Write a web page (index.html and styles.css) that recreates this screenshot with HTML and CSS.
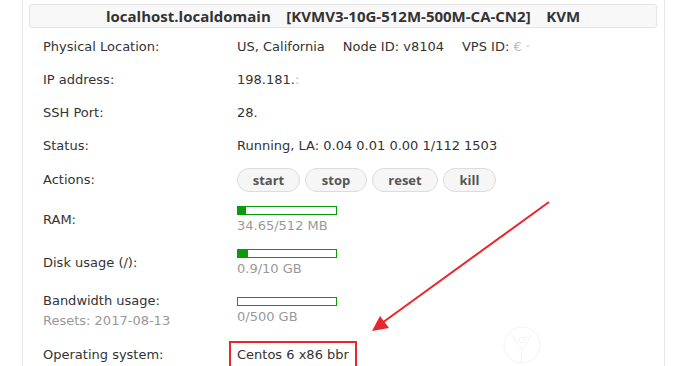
FILE: index.html
```html
<!DOCTYPE html>
<html>
<head>
<meta charset="utf-8">
<link rel="stylesheet" href="styles.css">
</head>
<body>
<div class="panel">
  <div class="title">localhost.localdomain&nbsp;&nbsp;&nbsp;&nbsp;[KVMV3-10G-512M-500M-CA-CN2]&nbsp;&nbsp;&nbsp;&nbsp;KVM</div>
  <div class="rows">
    <div class="row"><div class="label">Physical Location:</div><div class="value">US, California<span class="gap"></span>Node ID: v8104<span class="gap"></span>VPS ID: <span class="blur">€ ·</span></div></div>
    <div class="row"><div class="label">IP address:</div><div class="value">198.181.<span class="blur">:</span></div></div>
    <div class="row"><div class="label">SSH Port:</div><div class="value">28.</div></div>
    <div class="row"><div class="label">Status:</div><div class="value">Running, LA: 0.04 0.01 0.00 1/112 1503</div></div>
    <div class="row actions"><div class="label">Actions:</div><div class="value buttons"><button class="btn">start</button><button class="btn">stop</button><button class="btn">reset</button><button class="btn">kill</button></div></div>
    <div class="row meter ram"><div class="label">RAM:</div><div class="value"><div class="bar"><div class="fill" style="width:8px"></div></div><div class="muted">34.65/512 MB</div></div></div>
    <div class="row meter disk"><div class="label">Disk usage (/):</div><div class="value"><div class="bar"><div class="fill" style="width:10px"></div></div><div class="muted">0.9/10 GB</div></div></div>
    <div class="row meter bw"><div class="label">Bandwidth usage:<div class="muted reset">Resets: 2017-08-13</div></div><div class="value"><div class="bar"></div><div class="muted">0/500 GB</div></div></div>
    <div class="row os-row"><div class="label">Operating system:</div><div class="value"><span class="os">Centos 6 x86 bbr</span></div></div>
  </div>
</div>
<svg class="arrow" width="680" height="366" viewBox="0 0 680 366">
  <line x1="549" y1="202" x2="382" y2="323" stroke="#e8262b" stroke-width="2"/>
  <polygon points="372,331 380,316 389,328" fill="#e8262b"/>
</svg>
<svg class="mark" width="40" height="40" viewBox="0 0 40 40">
  <circle cx="20" cy="20" r="18" fill="none" stroke="#f4f4f4" stroke-width="1"/>
  <circle cx="20" cy="15" r="3" fill="none" stroke="#f4f4f4" stroke-width="1"/>
  <path d="M11 10 Q16 22 20 24 Q24 22 29 10 M20 24 L19 38" fill="none" stroke="#f4f4f4" stroke-width="1"/>
</svg>
</body>
</html>
```
FILE: styles.css
```css
html, body { margin: 0; padding: 0; background: #fff; }
body {
  width: 680px; height: 366px; overflow: hidden; position: relative;
  font-family: "DejaVu Sans", Verdana, sans-serif; font-size: 13px; color: #333;
}
.panel {
  margin-left: 22px; width: 643px; height: 366px;
  border-left: 1px solid #e6e6e6; border-right: 1px solid #e6e6e6;
  box-sizing: border-box; padding: 4px 7px 0 6px;
}
.title {
  height: 24px; line-height: 22px; box-sizing: border-box;
  background: #f8f8f8; border: 1px solid #e4e4e4; border-radius: 3px;
  text-align: center; font-family: "Open Sans", sans-serif;
  font-weight: 700; font-size: 15px; color: #333;
}
.rows { padding-left: 14px; padding-top: 10px; }
.row { display: flex; align-items: flex-start; height: 33px; }
.label { width: 194px; flex: none; line-height: 18px; }
.value { line-height: 18px; }
.gap { display: inline-block; width: 18px; }
.blur { color: #bbb; }
.actions { height: 34px; }
.actions .label { padding-top: 1px; }
.buttons { display: flex; gap: 5px; margin-top: -2px; }
.btn {
  font-family: "Open Sans", sans-serif; font-size: 13px; font-weight: 700; color: #555;
  background: #f6f6f6; border: 1px solid #dcdcdc; border-radius: 12px;
  height: 24px; padding: 0; line-height: 22px; cursor: pointer;
}
.btn:nth-child(1) { width: 63px; }
.btn:nth-child(2) { width: 62px; }
.btn:nth-child(3) { width: 66px; }
.btn:nth-child(4) { width: 53px; }
.meter .label { padding-top: 7px; }
.ram { height: 43px; }
.disk { height: 48px; }
.bw { height: 51px; }
.bw .label { padding-top: 0; margin-top: -3px; }
.reset { line-height: 24px; margin-top: -1px; }
.bar {
  width: 100px; height: 9px; box-sizing: border-box; border: 1px solid #0a9a0a;
  margin-top: 2px; margin-bottom: 2px; background: #fff;
}
.bw .bar + .muted { margin-top: 1px; }
.fill { height: 100%; background: #0a9a0a; }
.muted { color: #999; }
.os {
  display: inline-block; border: 2px solid #e8262b; padding: 3px 6px 8px 6px;
  margin-left: -8px; margin-top: -6px;
}
.arrow { position: absolute; left: 0; top: 0; pointer-events: none; }
.mark { position: absolute; left: 502px; top: 325px; }
```
